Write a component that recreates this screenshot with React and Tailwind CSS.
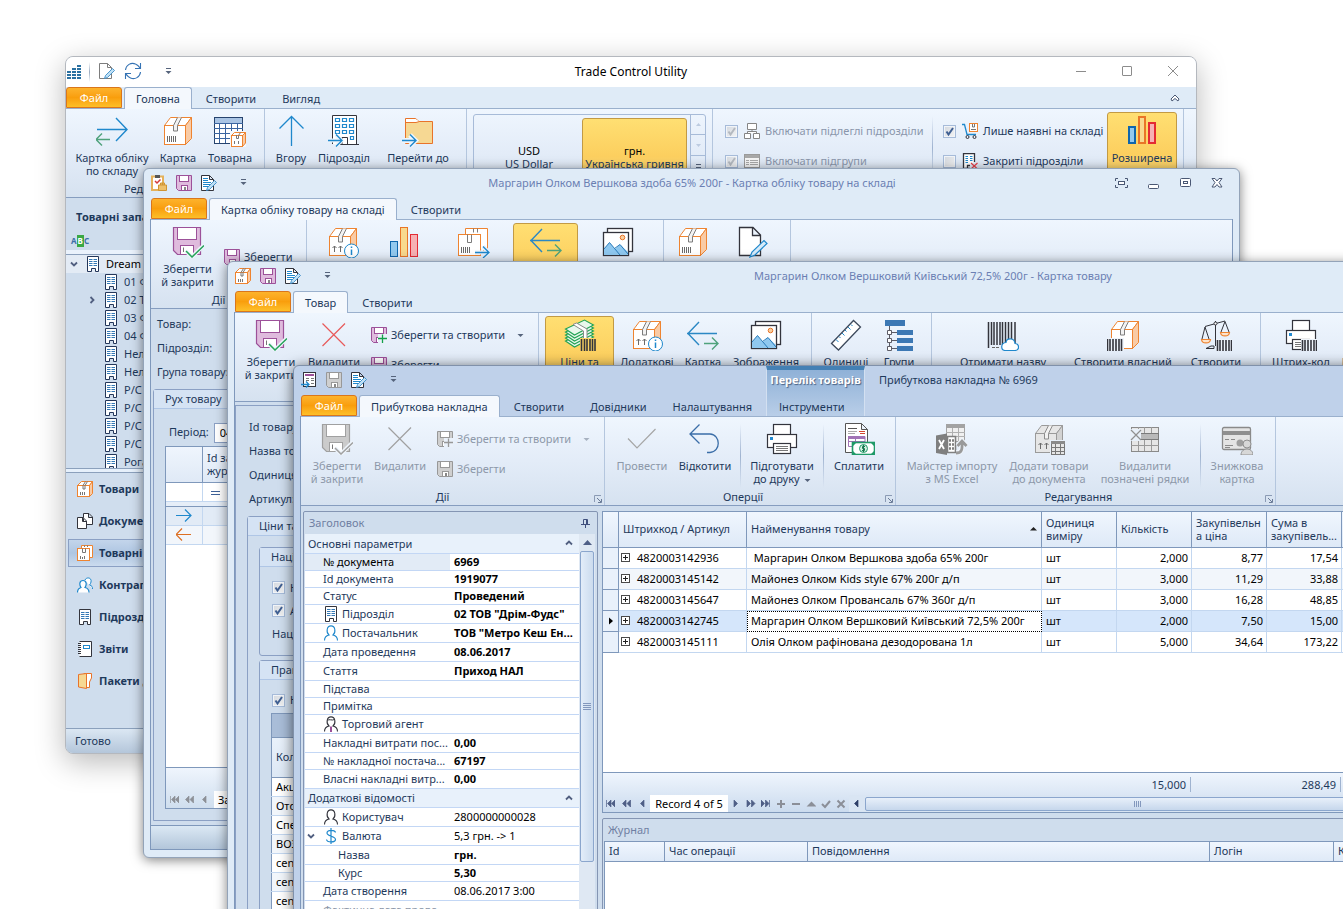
import React from "react";

const BLUE = "#1f88cc";
const GREEN = "#4fa27c";
const DARK = "#33343c";
const ORANGE = "#ee8431";
const PURPLE = "#9c5199";
const GRAY = "#9a9a9a";

/* ---------- icons ---------- */

const Icon = ({ size = 32, box = 32, children }) => (
  <svg
    width={size}
    height={size}
    viewBox={`0 0 ${box} ${box}`}
    fill="none"
    className="shrink-0"
    aria-hidden="true"
  >
    {children}
  </svg>
);

const BoxShape = ({ gray, arrows }) => {
  const line = gray ? GRAY : ORANGE;
  return (
    <g stroke={line}>
      <path d="M2.5 10.5 8.5 2.5H29.5L23.5 10.5Z" fill={gray ? "#e6e6e6" : "#fff"} />
      <path d="M23.5 10.5 29.5 2.5V23.5L23.5 29.5Z" fill={gray ? "#d2d2d2" : "#f9cba5"} />
      <rect x="2.5" y="10.5" width="21" height="19" fill={gray ? "#e6e6e6" : "#fff"} />
      <path d="M15.5 2.5 11.5 10.5V16H15.5V10.5L19.5 2.5" stroke={gray ? "#8c8c8c" : "#7c7c7c"} fill="#f2f2f2" />
      {arrows ? (
        <path d="M7.5 26V20M5.5 22 7.5 20 9.5 22M13.5 26V20M11.5 22 13.5 20 15.5 22" stroke="#6b6b6b" />
      ) : (
        <path d="M5.5 21V27M7.5 21V27M9.5 21V27M11.5 21V27M13.5 21V27" stroke="#6b6b6b" />
      )}
    </g>
  );
};

const Barcode = ({ x, y, w = 15, h = 12 }) => (
  <g>
    <rect x={x - 1} y={y - 1} width={w + 2} height={h + 2} fill="#eef4fb" />
    <path
      d={`M${x + 0.5} ${y}V${y + h}M${x + 3} ${y}V${y + h}M${x + 6} ${y}V${y + h}M${x + 9} ${y}V${y + h}M${x + 12} ${y}V${y + h}M${x + 14.5} ${y}V${y + h}`}
      stroke={DARK}
      strokeWidth="1.6"
    />
  </g>
);

const BoxIcon = () => (
  <Icon>
    <BoxShape />
  </Icon>
);

const SmallBoxIcon = () => (
  <Icon size={16} box={16}>
    <g stroke={ORANGE}>
      <path d="M.5 4.5 4.5.5H15.5L12.5 4.5Z" fill="#fff" />
      <path d="M12.5 4.5 15.5.5V12.5L12.5 15.5Z" fill="#f9cba5" />
      <rect x=".5" y="4.5" width="12" height="11" fill="#fff" />
      <path d="M8.5.5 6 4.5V8H8V4.5L10.5.5" stroke="#777" />
      <path d="M3.5 11V14M5.5 11V14M7.5 11V14" stroke="#777" />
    </g>
  </Icon>
);

const StockIcon = () => (
  <Icon size={16} box={16}>
    <g stroke={ORANGE}>
      <path d="M4.5 4V.5H15.5V12.5H13" fill="#fff" />
      <rect x=".5" y="3.5" width="12" height="12" fill="#fff" />
      <path d="M5.5 3.5V7.5H8.5V3.5M7.5.5V2M10.5.5V2" stroke="#777" />
      <path d="M3.5 11V14M5.5 12V14M7.5 11V14" stroke="#777" />
    </g>
  </Icon>
);

const BoxInfoIcon = () => (
  <Icon>
    <BoxShape arrows />
    <circle cx="24.5" cy="25" r="7" fill="#fff" stroke={BLUE} />
    <path d="M24.5 23.5V29M24.5 20.5V22" stroke={BLUE} strokeWidth="1.5" />
  </Icon>
);

const BoxesArrowIcon = () => (
  <Icon>
    <g stroke={ORANGE}>
      <path d="M7.5 8V2.5H29.5V24.5H25" fill="#fff" />
      <rect x=".5" y="8.5" width="22" height="21" fill="#fff" />
      <path d="M9.5 8.5V16.5H13.5V8.5M15.5 2.5V6.5M19.5 2.5V6.5" stroke="#7c7c7c" />
      <path d="M3.5 21V27M5.5 21V27M7.5 21V27M9.5 21V27M11.5 21V27" stroke="#6b6b6b" />
    </g>
    <path d="M17 26.5H31M25 20.5 31 26.5 25 32" stroke="#eaf2fb" strokeWidth="4" />
    <path d="M17 26.5H31M25 20.5 31 26.5 25 32" stroke={BLUE} strokeWidth="1.3" />
  </Icon>
);

const BoxTableIcon = () => (
  <Icon>
    <BoxShape gray arrows />
    <rect x="17" y="17" width="15" height="15" fill="#e8f0f9" />
    <rect x="18.5" y="18.5" width="13" height="13" fill="#e6e6e6" stroke="#777" />
    <rect x="18" y="18" width="14" height="3" fill="#8a8a8a" />
    <path d="M18 24.5H32M18 28.5H32M22.5 21V32M27.5 21V32" stroke="#777" />
  </Icon>
);

const BoxBarcodeIcon = () => (
  <Icon>
    <g transform="translate(2 0)">
      <BoxShape />
    </g>
    <Barcode x={0} y={20} w={16} h={12} />
  </Icon>
);

const GoodsTableIcon = () => (
  <Icon>
    <rect x=".5" y="2.5" width="28" height="26" fill="#fff" stroke="#26436d" />
    <rect x="1" y="3" width="27" height="5" fill="#a9c4e4" />
    <path d="M0 8.5H29M0 13.5H29M0 18.5H29M0 23.5H29M5.5 8V28M11.5 8V28M17.5 8V28M23.5 8V28" stroke="#3a64a0" />
    <rect x="16" y="16" width="16" height="16" fill="#f3f8fd" />
    <g stroke={ORANGE} fill="#fff">
      <path d="M17.5 20.5 20.5 17.5H31.5L28.5 20.5Z" />
      <path d="M28.5 20.5 31.5 17.5V28L28.5 31.5Z" fill="#f9cba5" />
      <rect x="17.5" y="20.5" width="11" height="11" />
      <path d="M22.5 20V23.5H24.5V20.5L26.5 17.5M20.5 26V29M24.5 26V29" stroke="#777" fill="none" />
    </g>
  </Icon>
);

const FlowRightIcon = () => (
  <Icon>
    <path d="M1 14.5H31M20 3 31 14.5 20 26" stroke={BLUE} strokeWidth="1.4" />
    <path d="M14 24.5H0M6 18.5 0 24.5 6 30.5" stroke={GREEN} strokeWidth="1.4" />
  </Icon>
);

const FlowLeftIcon = () => (
  <Icon>
    <path d="M30 14.5H0M12 3 1 14.5 12 26" stroke="#2b88c4" strokeWidth="1.4" />
    <path d="M17 24.5H31M25 18.5 31 24.5 25 30.5" stroke={GREEN} strokeWidth="1.4" />
  </Icon>
);

const ArrowUpIcon = () => (
  <Icon>
    <path d="M16.5 31V2M4.5 13.5 16.5 1.5 28.5 13.5" stroke={BLUE} strokeWidth="1.3" />
  </Icon>
);

const BranchIcon = () => (
  <Icon>
    <path d="M4.5 29V.5H28.5V29.5M12 29.5H31M14 29V22.5H19.5V29" fill="#fff" stroke={DARK} />
    <g stroke={BLUE} strokeWidth="1.2">
      {[3.5, 9.5, 15.5].map((y) => (
        <path key={y} d={`M7.5 ${y}h4v3h-4ZM14.5 ${y}h4v3h-4ZM21.5 ${y}h4v3h-4Z`} />
      ))}
      <path d="M22.5 21.5h3v3h-3Z" />
    </g>
    <path d="M0 25.5H13M8 20 13.5 25.5 8 31" stroke="#eef5fc" strokeWidth="4" />
    <path d="M0 25.5H14M8 19.5 14 25.5 8 31.5" stroke={BLUE} strokeWidth="1.4" />
  </Icon>
);

const FolderGoIcon = () => (
  <Icon>
    <path d="M3.5 28.5V3.5H13.5L17 6.5H30.5V28.5Z" fill="#f6d893" stroke="#e8732a" />
    <path d="M4 7.5H14L17.5 6.5L13.5 4H4Z" fill="#fff" />
    <path d="M4 7.5H14L17.5 6.5" stroke="#e8732a" />
    <path d="M0 25.5H13M8 20 13.5 25.5 8 31" stroke="#eef5fc" strokeWidth="5" />
    <path d="M0 25.5H14M8 19.5 14 25.5 8 31.5" stroke={BLUE} strokeWidth="1.4" />
  </Icon>
);

const ChartIcon = ({ bold }) => (
  <Icon>
    {bold ? (
      <g strokeWidth="2">
        <rect x="3" y="12" width="6" height="16" fill="#93c9ee" stroke="#0f66ad" />
        <rect x="13" y="2" width="6" height="26" fill="#f8d98e" stroke="#e97527" />
        <rect x="23" y="8" width="6" height="20" fill="#f6b1b4" stroke="#e42a33" />
      </g>
    ) : (
      <g>
        <rect x="2.5" y="15.5" width="7" height="15" fill="#93c9ee" stroke="#0f66ad" />
        <rect x="12.5" y="1.5" width="7" height="29" fill="#f8d98e" stroke="#e97527" />
        <rect x="22.5" y="8.5" width="7" height="22" fill="#f6b1b4" stroke="#e42a33" />
      </g>
    )}
  </Icon>
);

const SaveCloseIcon = ({ gray }) => {
  const line = gray ? "#a0a0a0" : PURPLE;
  return (
    <Icon>
      <g stroke={line}>
        <path d="M1.5 1.5H28.5V28.5H5.5L1.5 24.5Z" fill={gray ? "#cbcbcb" : "#dfbbdd"} strokeWidth="1.2" />
        <rect x="5.5" y="1.5" width="19" height="12" fill="#fff" />
        <rect x="8.5" y="19.5" width="13" height="9" fill="#fff" />
      </g>
      <path d="M11.5 21.5V26" stroke="#777" />
      <path d="M14 25 20 31 32 19" stroke="#eef4fb" strokeWidth="4" />
      <path d="M14 25 20 31 32 19.5" stroke={gray ? "#a0a0a0" : "#27a35a"} strokeWidth="1.5" />
    </Icon>
  );
};

const SaveIcon = ({ gray, plus }) => {
  const line = gray ? "#989898" : PURPLE;
  return (
    <Icon size={16} box={16}>
      <path d="M.5.5H15.5V15.5H2.5L.5 13.5Z" fill={gray ? "#cfcfcf" : "#dfbbdd"} stroke={line} />
      <rect x="3.5" y=".5" width="9" height="6" fill="#fff" stroke={line} />
      <rect x="5.5" y="10.5" width="6" height="5" fill="#fff" stroke={line} />
      <rect x="8" y="12" width="2" height="3" fill="#888" />
      {plus && (
        <>
          <rect x="7" y="7" width="9" height="9" fill="#eaf1fa" />
          <path d="M11.5 7.5V16M7 11.5H16" stroke={gray ? "#989898" : "#14a04a"} strokeWidth="1.3" />
        </>
      )}
    </Icon>
  );
};

const DeleteIcon = ({ gray }) => (
  <Icon>
    <path d="M4.5 4.5 27 27M27 4.5 4.5 27" stroke={gray ? "#a0a0a0" : "#e85a5a"} strokeWidth="1.2" />
  </Icon>
);

const PicturesIcon = () => (
  <Icon>
    <rect x="5.5" y="2.5" width="25" height="23" fill="#fff" stroke={DARK} strokeWidth="1.3" />
    <rect x="1.5" y="6.5" width="25" height="23" fill="#fff" stroke={DARK} strokeWidth="1.3" />
    <path d="M2 23 7.5 16.5 13 23 18 18.5 26 26V29H2Z" fill="#8fc8ef" />
    <path d="M2 23 7.5 16.5 18 29M12.5 22.5 18 18.5 26 28" stroke="#2b7cba" />
    <circle cx="20.5" cy="11.5" r="2.3" fill="#f9cfa0" stroke="#e97527" />
  </Icon>
);

const DocPencilIcon = () => (
  <Icon>
    <path d="M3.5 1.5H17L24.5 9V29.5H3.5ZM16.5 1.5V9.5H24.5" fill="#fff" stroke={DARK} strokeWidth="1.3" />
    <path d="M14 31 16 26 28 14.5 31 17.5 19 29Z" fill="#d6ebfa" stroke={BLUE} strokeWidth="1.2" />
  </Icon>
);

const MoneyIcon = () => (
  <Icon>
    <g stroke="#23a455" fill="#e8f7ec" strokeWidth="1.1">
      {[10, 7, 4, 1, -2].map((y) => (
        <path key={y} d={`M1.5 ${y + 12} 20.5 ${y + 3} 29.5 ${y + 8} 10.5 ${y + 18}Z`} />
      ))}
    </g>
    <path d="M9 5.5 19.5 12V22L23 20V10L12.5 4Z" fill="#fff" stroke="#8a8a8a" />
    <rect x="16" y="19" width="16" height="13" fill="#fcd564" />
    <path d="M17.5 20V32M20.5 20V32M23 20V32M26 20V32M28.5 20V32M31 20V32" stroke={DARK} strokeWidth="1.6" />
  </Icon>
);

const RulerIcon = () => (
  <Icon>
    <path d="M1.5 24.5 23.5 1.5 30.5 8 8.5 31Z" fill="#fff" stroke="#3e4a5c" strokeWidth="1.3" />
    <path d="M6 20.5 8.5 23M9 17.5 10.5 19M12 14 14.5 16.5M15 11 16.5 12.5M18 8 20.5 10.5M21 5.5 22.5 7" stroke={BLUE} />
  </Icon>
);

const HierarchyIcon = () => (
  <Icon>
    <path d="M6.5 7V29M6 13.5H14M6 21.5H14M6 29.5H14" stroke="#5c5c66" />
    <path d="M2 1h20v6H2ZM14 11h16v5H14ZM14 19h16v5H14ZM14 27h16v5H14Z" fill="#3c78b4" />
    <path d="M4.5 11.5h4v4h-4ZM4.5 19.5h4v4h-4ZM4.5 27.5h4v4h-4Z" fill="#fff" stroke="#5c5c66" />
  </Icon>
);

const BarcodeCloudIcon = () => (
  <Icon>
    <path d="M1.5 3V29M4.5 3V26M7 3V26M10 3V26M13 3V26M15.5 3V26M18.5 3V26M21.5 3V26M24.5 3V26M28 3V26" stroke={DARK} strokeWidth="1.5" />
    <path d="M5 28.5H13" stroke="#666" strokeDasharray="3 1" />
    <path d="M18 31.5H28C33 31 32.5 25 28 24.5 27.5 18.5 19.5 18.5 19 23.5 13.5 24 13.5 31 18 31.5Z" fill="#fff" stroke={BLUE} strokeWidth="1.2" />
  </Icon>
);

const ScalesIcon = () => (
  <Icon>
    <path d="M15.5 2V27M5 7.5 14 5 25 2M6 29.5H14V27H11L6 29.5M5 8 2 20M5 8 9 20M25 2.5 21 13M25 2.5 29 13" stroke={DARK} />
    <circle cx="15.5" cy="4.5" r="1.5" fill="#fff" stroke={DARK} />
    <path d="M1.5 20.5H10.5C10 25 2 25 1.5 20.5ZM20.5 13.5H29.5C29 18 21 18 20.5 13.5Z" fill="#fde3ca" stroke={ORANGE} strokeWidth="1.2" />
    <Barcode x={17} y={21} w={15} h={11} />
  </Icon>
);

const PrinterShape = () => (
  <g stroke={DARK} fill="#fff" strokeWidth="1.2">
    <rect x="7.5" y="1.5" width="17" height="12" />
    <rect x="1.5" y="11.5" width="29" height="13" />
    <rect x="4" y="14" width="3" height="3" fill="#2289d0" stroke="none" />
    <rect x="7.5" y="20.5" width="17" height="10" />
    <path d="M10 23.5H22M10 25.5H22M10 27.5H22" stroke="#777" strokeWidth="1" />
  </g>
);

const PrinterIcon = () => (
  <Icon>
    <PrinterShape />
  </Icon>
);

const PrinterBarcodeIcon = () => (
  <Icon>
    <PrinterShape />
    <Barcode x={17} y={21} w={15} h={11} />
  </Icon>
);

const CheckIcon = () => (
  <Icon>
    <path d="M2 15.5 11 25 29.5 6" stroke="#a6a6a6" strokeWidth="1.2" />
  </Icon>
);

const UndoIcon = () => (
  <Icon>
    <path d="M10.5 1.5 1 11 10.5 20.5M1 11H21C32 11.5 32 29 21 29.5H18" stroke="#3b6ea8" strokeWidth="1.3" />
  </Icon>
);

const PayIcon = () => (
  <Icon>
    <path d="M2.5.5H18.5L24.5 6.5V29.5H2.5ZM18.5.5V6.5H24.5" fill="#fff" stroke="#555" />
    <path d="M5 5.5H14" stroke="#555" />
    <path d="M5 8.5H14M5 10.5H12" stroke="#aaa" />
    <path d="M16 8.5H22M17 10.5H22" stroke="#d2452f" strokeWidth="1.2" />
    <path d="M5.5 13.5H22V23.5H5.5ZM5 18.5H22M12.5 14V23" stroke="#a173b5" />
    <rect x="5" y="13" width="17" height="3" fill="#a173b5" />
    <rect x="9.5" y="19.5" width="22" height="12" fill="#fff" stroke="#1f9a68" strokeWidth="1.6" />
    <circle cx="20.5" cy="25.5" r="4" fill="#d5f0e2" stroke="#1f9a68" />
    <path d="M22 23.5H19.5V25.5H21.5V27.5H19M20.5 22V29" stroke="#17784f" />
    <path d="M10 20h3l-3 3ZM31 20h-3l3 3ZM10 31h3l-3-3ZM31 31h-3l3-3Z" fill="#1f9a68" />
  </Icon>
);

const ExcelIcon = () => (
  <Icon>
    <rect x="10.5" y="1.5" width="18" height="17" fill="#f0f0f0" stroke="#a3a3a3" />
    <rect x="10" y="1" width="19" height="4" fill="#a3a3a3" />
    <path d="M10 9.5H29M10 13.5H29M16.5 5V19M22.5 5V19" stroke="#b0b0b0" />
    <path d="M0 12.5 11 10.5V32L0 30Z" fill="#7f7f7f" />
    <path d="M3 17 8 26M8 17 3 26" stroke="#fff" strokeWidth="1.8" />
    <path d="M11.5 13.5H19.5V29.5H11.5Z" fill="#fff" stroke="#7f7f7f" strokeWidth="1.6" />
    <path d="M13 17.5H18M13 21.5H18M13 25.5H18" stroke="#7f7f7f" strokeWidth="2.4" strokeDasharray="2 1" />
    <path d="M20 29.5C25 30 26.5 27 26 19M21.5 23 26 18 30.5 23" stroke="#eef4fb" strokeWidth="5" />
    <path d="M20 30C25.5 30 26.5 27 26 19.5M21.5 23 26 18 30.5 23" stroke="#9a9a9a" strokeWidth="2.8" />
  </Icon>
);

const RowsDeleteIcon = () => (
  <Icon>
    <rect x="2.5" y="4.5" width="27" height="24" fill="#e6e6e6" stroke="#8a8a8a" />
    <path d="M2 10.5H30M2 16.5H30M2 22.5H30M9.5 4V28M15.5 4V28M22.5 4V28" stroke="#9a9a9a" />
    <rect x="11.5" y="10.5" width="18" height="6" fill="#b9b9b9" stroke="#7b7b7b" />
    <rect x="1" y="6" width="11" height="12" fill="#e8f0f9" />
    <path d="M2 7 12 17M12 7 2 17" stroke="#909090" strokeWidth="1.2" />
  </Icon>
);

const CardUserIcon = () => (
  <Icon>
    <rect x="1.5" y="4.5" width="28" height="22" rx="1.5" fill="#e4e4e4" stroke="#8a8a8a" strokeWidth="1.3" />
    <rect x="2" y="8" width="27" height="4" fill="#8f8f8f" />
    <path d="M4 16.5H8M10 16.5H14M4 22.5H12M4 24.5H9" stroke="#8a8a8a" />
    <circle cx="19" cy="20" r="3.5" fill="#9e9e9e" />
    <path d="M20 32C20 24 32 24 32 32Z" fill="#d7d7d7" stroke="#909090" />
    <circle cx="26" cy="21" r="4" fill="#d7d7d7" stroke="#909090" />
  </Icon>
);

const BuildingIcon = ({ color = "#24375a" }) => (
  <Icon size={16} box={16}>
    <path d="M2.5 15.5V.5H13.5V15.5H10.5V12.5H6.5V15.5Z" fill="#fff" stroke={color} />
    <path
      d="M4 3.5H7.5M8.5 3.5H12M4 5.5H7.5M8.5 5.5H12M4 7.5H7.5M8.5 7.5H12M4 9.5H7.5M8.5 9.5H12"
      stroke="#3579b5"
    />
  </Icon>
);

const BuildingClosedIcon = () => (
  <Icon size={16} box={16}>
    <path d="M1.5 15.5V.5H12.5V9M1 15.5H8M5.5 15V12.5H8" fill="#fff" stroke={DARK} strokeWidth="1.3" />
    <path d="M3.5 3.5H6M8 3.5H10.5M3.5 5.5H6M8 5.5H10.5M3.5 7.5H6M8 7.5H10.5M3.5 9.5H6" stroke={BLUE} />
    <path d="M9 10 15.5 16M15.5 10 9 16" stroke="#e5404a" strokeWidth="1.2" />
  </Icon>
);

const CartIcon = () => (
  <Icon size={16} box={16}>
    <path d="M0 1.5H2.5L5 11.5H14" stroke={BLUE} strokeWidth="1.3" />
    <rect x="7.5" y=".5" width="8" height="8" fill="#fff" stroke={ORANGE} />
    <path d="M10.5 1V4H12.5V1M9 6.5H14" stroke="#777" />
    <circle cx="5.5" cy="14" r="1.5" stroke={DARK} />
    <circle cx="12.5" cy="14" r="1.5" stroke={DARK} />
  </Icon>
);

const OrgIcon = () => (
  <Icon size={16} box={16}>
    <path
      d="M3.5.5H12.5V6.5H3.5ZM.5 10.5H6.5V15.5H.5ZM9.5 10.5H15.5V15.5H9.5ZM8 6.5V8.5M3.5 10.5V8.5H12.5V10.5"
      fill="#fff"
      stroke="#858585"
    />
  </Icon>
);

const ListIcon = () => (
  <Icon size={16} box={16}>
    <rect x=".5" y="1.5" width="15" height="13" fill="#f5f5f5" stroke="#9a9a9a" />
    <rect x="1" y="2" width="14" height="3" fill="#a8a8a8" />
    <path d="M2 7.5H5M6 7.5H14M2 9.5H5M6 9.5H14M2 11.5H5M6 11.5H14" stroke="#a8a8a8" />
  </Icon>
);

const DocEditIcon = ({ lines }) => (
  <Icon size={16} box={16}>
    <path d="M.5.5H8.5L12.5 4.5V15.5H.5ZM8.5.5V4.5H12.5" fill="#fff" stroke={lines ? DARK : "#7d7d7d"} />
    {lines && <path d="M2 3.5H7M2 5.5H7M2 7.5H10M2 9.5H9M2 11.5H8" stroke={BLUE} />}
    <path d="M5.5 15.5 6.5 12.5 13.5 5.5 15.5 7.5 8.5 14.5Z" fill="#bfe0f5" stroke="#3b8bc6" strokeWidth=".9" />
  </Icon>
);

const RefreshIcon = () => (
  <Icon size={18} box={18}>
    <path
      d="M1.5 8C2 3 7 0 11.5 2 14 3 15 4.5 16.5 6.5M16.5 1V6.5H11M16.5 10C16 15 11 18 6.5 16 4 15 3 13.5 1.5 11.5M1.5 17V11.5H7"
      stroke="#3573b4"
      strokeWidth="1.1"
    />
  </Icon>
);

const LogoIcon = () => (
  <Icon size={16} box={16}>
    <path
      d="M0 7h4v2H0ZM0 10h4v2H0ZM0 13h4v2H0ZM5 4h4v2H5ZM5 7h4v2H5ZM5 10h4v2H5ZM5 13h4v2H5ZM10 1h4v2H10ZM10 4h4v2H10ZM10 7h4v2H10ZM10 10h4v2H10ZM10 13h4v2H10Z"
      fill="#2b71a1"
    />
  </Icon>
);

const ClipboardIcon = () => (
  <Icon size={16} box={16}>
    <path d="M1 1.5H12V15H1Z" fill="#fff" stroke="#e5b15a" strokeWidth="2" />
    <rect x="4" y="0" width="5" height="3" fill="#555" />
    <path d="M4 6 6 8 9.5 4.5" stroke="#d43a3a" strokeWidth="1.5" />
    <path d="M7.5 10H15.5V15.5H7.5ZM9.5 10V8H11.5V10M11.5 8H13.5V10" fill="#eec06a" stroke="#cf9433" />
  </Icon>
);

const InvoiceIcon = () => (
  <Icon size={16} box={16}>
    <rect x="2.5" y=".5" width="12" height="14" fill="#fff" stroke={DARK} />
    <rect x="4" y="2" width="9" height="2" fill={PURPLE} />
    <path d="M5 6.5H8M10 6.5H13M5 8.5H8M10 8.5H13M10 11.5H13" stroke="#777" />
    <path d="M0 12.5H8M5 9.5 8 12.5 5 15.5" stroke={BLUE} strokeWidth="1.3" />
  </Icon>
);

const DocsIcon = () => (
  <Icon size={16} box={16}>
    <path d="M6.5.5H12L15.5 4V11.5H6.5ZM11.5.5V4.5H15.5" fill="#fff" stroke={DARK} />
    <path d="M.5 4.5H6L9.5 8V15.5H.5ZM5.5 4.5V8.5H9.5" fill="#fff" stroke={DARK} />
  </Icon>
);

const PersonIcon = ({ color = DARK, tie }) => (
  <Icon size={16} box={16}>
    <path
      d="M1.5 15.5C1.5 12 4 10.5 6 10 3 7.5 3.5.9 8 .9S13 7.5 10 10C12 10.5 14.5 12 14.5 15.5"
      fill="#fff"
      stroke={color}
      strokeWidth="1.1"
    />
    {tie && (
      <>
        <path d="M4.5 4.5C6 2.5 9 5 11.5 3.5" stroke={color} />
        <path d="M8 10.5V16" stroke={PURPLE} strokeWidth="2" />
      </>
    )}
  </Icon>
);

const PeopleIcon = () => (
  <Icon size={16} box={16}>
    <path d="M8 3C9 0 15 0 14 5 13.5 7 13 7 12.5 8 15 8.5 15.5 10 15.5 12" fill="#fff" stroke={BLUE} />
    <path
      d="M.5 15.5C.5 12 2.5 11 4 10.5 2 7.5 2.5 3.5 6 3.5S10 7.5 8 10.5C10 11 12 12 12 15.5"
      fill="#fff"
      stroke={BLUE}
      strokeWidth="1.2"
    />
  </Icon>
);

const ReportIcon = () => (
  <Icon size={16} box={16}>
    <path d="M2.5.5H14.5V15.5H2.5" fill="#fff" stroke={DARK} />
    <path d="M1 2.5H4M1 4.5H4M1 6.5H4M1 8.5H4M1 10.5H4M1 12.5H4" stroke={DARK} />
    <rect x="6.5" y="4.5" width="6" height="3" stroke={BLUE} />
  </Icon>
);

const FolderIcon = () => (
  <Icon size={16} box={16}>
    <path d="M7 .5H14.5V5L12.5 9V14.5H8Z" fill="#fff" stroke="#e8732a" />
    <path d="M1.5 1.5 9.5.5V15.5L1.5 14Z" fill="#f6d893" stroke="#e8732a" />
  </Icon>
);

const DollarIcon = () => (
  <Icon size={16} box={16}>
    <path d="M12.5 4.5C12 1.5 4 1.5 4 5S12.5 8 12.5 11.5 4 14.5 3.5 11.5M8 0V16" stroke={BLUE} strokeWidth="1.2" />
  </Icon>
);

const Caret = ({ gray }) => (
  <Icon size={7} box={7}>
    <path d="M.5 2H6.5L3.5 5Z" fill={gray ? "#a7b1c0" : "#56647c"} />
  </Icon>
);

const Chevron = ({ path }) => (
  <Icon size={8} box={8}>
    <path d={path} stroke="#515f80" strokeWidth="1.8" />
  </Icon>
);

const CHEVRON_UP = "M1 5.5 4 2.5 7 5.5";
const CHEVRON_DOWN = "M1 2.5 4 5.5 7 2.5";
const CHEVRON_RIGHT = "M2.5 1 5.5 4 2.5 7";

/* ---------- window chrome ---------- */

const QuickAccess = ({ icons }) => (
  <div className="flex items-center pb-[2px]">
    <div className="flex items-center gap-[9px]">
      {icons.map((icon, i) => (
        <button key={i} className="block">
          {icon}
        </button>
      ))}
    </div>
    <button className="ml-[23px] block" aria-label="Панель швидкого доступу">
      <Icon size={7} box={7}>
        <path d="M1 .5H6" stroke="#56647c" />
        <path d="M.5 3H6.5L3.5 6Z" fill="#56647c" />
      </Icon>
    </button>
  </div>
);

const TabBar = ({ active, tabs }) => (
  <div className="flex h-[21px] items-end leading-[20px]">
    <button className="h-[21px] w-14 rounded-t-[3px] border border-[#d9761c] bg-gradient-to-b from-[#fdb32b] via-[#f99e0c] to-[#fdbf27] text-center text-white">
      Файл
    </button>
    <button className="relative z-10 -mb-px ml-[2px] h-[22px] rounded-t-[3px] border border-b-0 border-[#9ab0cd] bg-[#f4f8fd] px-[11px]">
      {active}
    </button>
    {tabs.map((t) => (
      <button key={t} className="ml-[2px] h-[21px] px-3 pt-[2px] leading-[19px]">
        {t}
      </button>
    ))}
  </div>
);

const Ribbon = ({ children }) => (
  <div className="flex h-[90px] shrink-0 overflow-hidden border-y border-t-[#9ab0cd] border-b-[#869dbf] bg-gradient-to-b from-[#eff6fe] via-[#e3ecf8] to-[#d6e2f0]">
    {children}
  </div>
);

const Group = ({ caption, width, launcher, children }) => (
  <div className={`relative flex shrink-0 flex-col border-r border-[#b4c6de] ${width}`}>
    <div className="flex h-[72px] pt-[3px]">{children}</div>
    {caption && <div className="pt-px pr-5 text-center leading-[13px]">{caption}</div>}
    {launcher && (
      <button className="absolute right-[2px] bottom-[2px]" aria-label={caption}>
        <Icon size={8} box={8}>
          <path d="M.5 7V.5H7" stroke="#8b9bb5" />
          <path d="M3 3 7 7M7.5 4V7.5H4" stroke="#6b7c98" />
        </Icon>
      </button>
    )}
  </div>
);

const BigButton = ({ icon, lines, width, selected, disabled, caret }) => (
  <button
    disabled={disabled}
    className={`flex h-[84px] shrink-0 flex-col items-center whitespace-nowrap ${width} ${
      selected
        ? "rounded-[3px] border border-[#c29a45] bg-gradient-to-b from-[#ffdf72] via-[#fccf5f] to-[#fde183] pt-[2px]"
        : "pt-[3px]"
    } ${disabled ? "text-[#8d98a9]" : ""}`}
  >
    {icon}
    {lines && (
      <span className="mt-1 block text-center leading-[13px]">
        {lines[0]}
        {lines[1] && (
          <>
            <br />
            {lines[1]}
            {caret && (
              <span className="ml-1 inline-block align-middle">
                <Caret />
              </span>
            )}
          </>
        )}
      </span>
    )}
  </button>
);

const SmallButton = ({ icon, label, disabled, caret }) => (
  <button
    disabled={disabled}
    className={`flex h-[30px] items-center gap-1 whitespace-nowrap ${disabled ? "text-[#8d98a9]" : ""}`}
  >
    {icon}
    {label}
    {caret && (
      <span className="ml-2">
        <Caret gray={disabled} />
      </span>
    )}
  </button>
);

const Divider = () => (
  <div className="mt-1 h-16 w-px shrink-0 bg-gradient-to-b from-transparent via-[#9fb3d0] to-transparent" />
);

const Check = ({ label, icon, checked, disabled }) => (
  <label
    className={`flex h-[30px] items-center whitespace-nowrap ${disabled ? "text-[#8a96ab]" : ""}`}
  >
    <span className="relative block size-[13px]">
      <input
        type="checkbox"
        defaultChecked={checked}
        disabled={disabled}
        className="block size-[13px] appearance-none border border-[#a6bbd9] bg-gradient-to-br from-[#d3d8df] to-[#f4f4f4] shadow-[inset_0_0_0_1px_#f1f4f8]"
      />
      {checked && (
        <svg className="pointer-events-none absolute inset-0" width="13" height="13" viewBox="0 0 13 13" fill="none">
          <path d="M3.5 6.5 5.5 9.5 10 3" stroke={disabled ? "#b4b9c0" : "#3f5f92"} strokeWidth="2" />
        </svg>
      )}
    </span>
    {icon && <span className="ml-[6px]">{icon}</span>}
    <span className="ml-[5px]">{label}</span>
  </label>
);

/* ---------- record navigator ---------- */

const NAV_ICONS = {
  first: "M1.5 1V8M6 1 2.5 4.5 6 8ZM10 1 6.5 4.5 10 8Z",
  fastBack: "M5 1 1.5 4.5 5 8ZM9.5 1 6 4.5 9.5 8Z",
  back: "M7 1 3.5 4.5 7 8Z",
  forward: "M3 1 6.5 4.5 3 8Z",
  fastForward: "M1 1 4.5 4.5 1 8ZM5.5 1 9 4.5 5.5 8Z",
  last: "M8.5 1V8M0 1 3.5 4.5 0 8ZM4.5 1 8 4.5 4.5 8Z",
};

const NavButton = ({ name, color = "#4f5f86" }) => (
  <button className="block" aria-label={name}>
    <Icon size={10} box={10}>
      <path d={NAV_ICONS[name]} fill={color} stroke={color} strokeWidth=".7" />
    </Icon>
  </button>
);

const EditButton = ({ d, name }) => (
  <button className="block" aria-label={name}>
    <Icon size={10} box={10}>
      <path d={d} stroke="#8b8f98" strokeWidth="2" />
    </Icon>
  </button>
);

/* ---------- stock list window ---------- */

const TREE = [
  "01 Філія",
  "02 ТОВ",
  "03 Філія",
  "04 Філія",
  "Нелік",
  "Нелік",
  "Р/С",
  "Р/С",
  "Р/С",
  "Р/С",
  "Рогань",
];

const SECTIONS = [
  { label: "Товари", icon: <SmallBoxIcon /> },
  { label: "Документи", icon: <DocsIcon /> },
  { label: "Товарні запаси", icon: <StockIcon />, selected: true },
  { label: "Контрагенти", icon: <PeopleIcon /> },
  { label: "Підрозділи", icon: <BuildingIcon color={DARK} /> },
  { label: "Звіти", icon: <ReportIcon /> },
  { label: "Пакети документів", icon: <FolderIcon /> },
];

const MainWindow = () => (
  <section className="absolute top-14 right-[146px] bottom-[155px] left-[65px] flex flex-col overflow-hidden rounded-lg border border-[#b4b8be] bg-[#dfebf7] shadow-[0_8px_30px_rgba(0,0,0,0.28)]">
    <header className="grid h-[30px] shrink-0 grid-cols-[1fr_auto_1fr] items-center bg-white">
      <div className="flex items-center pl-px">
        <LogoIcon />
        <div className="mr-[9px] ml-[6px] h-5 w-px bg-gradient-to-b from-transparent via-[#9aaac0] to-transparent" />
        <QuickAccess icons={[<DocEditIcon />, <RefreshIcon />]} />
      </div>
      <h1 className="text-[12px] text-black">Trade Control Utility</h1>
      <div className="flex items-center justify-end gap-9 pr-[18px] pb-[2px] text-[#8c8c8c]">
        <button className="block" aria-label="Згорнути">
          <Icon size={10} box={10}>
            <path d="M0 5.5H10" stroke="currentColor" />
          </Icon>
        </button>
        <button className="block" aria-label="Розгорнути">
          <Icon size={10} box={10}>
            <rect x=".5" y=".5" width="9" height="9" rx=".5" stroke="currentColor" />
          </Icon>
        </button>
        <button className="block" aria-label="Закрити">
          <Icon size={10} box={10}>
            <path d="M0 0 10 10M10 0 0 10" stroke="currentColor" />
          </Icon>
        </button>
      </div>
    </header>

    <div className="flex items-center justify-between">
      <TabBar active="Головна" tabs={["Створити", "Вигляд"]} />
      <button className="mr-4" aria-label="Згорнути стрічку">
        <Icon size={10} box={10}>
          <path d="M1 6 5 2 9 6 8 8 5 5.5 2 8Z" stroke="#4a5874" fill="#fff" />
        </Icon>
      </button>
    </div>

    <Ribbon>
      <Group width="w-[199px] pl-[6px]" caption="Редагування">
        <BigButton width="w-20" icon={<FlowRightIcon />} lines={["Картка обліку", "по складу"]} />
        <BigButton width="w-[52px]" icon={<BoxIcon />} lines={["Картка"]} />
        <BigButton width="w-[52px]" icon={<GoodsTableIcon />} lines={["Товарна"]} />
      </Group>
      <Group width="w-[202px]">
        <BigButton width="w-[52px]" icon={<ArrowUpIcon />} lines={["Вгору"]} />
        <BigButton width="w-[54px]" icon={<BranchIcon />} lines={["Підрозділ"]} />
        <BigButton width="w-[94px]" icon={<FolderGoIcon />} lines={["Перейти до"]} />
      </Group>
      <Group width="w-[246px] px-[6px]">
        <div className="mt-[2px] flex h-20 flex-1 rounded-t-[3px] border border-[#a7bbd8] leading-[13px]">
          <button className="flex flex-1 flex-col items-center pt-[29px] pl-[2px]">
            <span className="text-black">USD</span>
            US Dollar
          </button>
          <button className="mt-[3px] flex w-[105px] flex-col items-center rounded-[3px] border border-[#c29a45] bg-gradient-to-b from-[#ffdf72] via-[#fccf5f] to-[#fde183] pt-[25px] whitespace-nowrap">
            <span className="text-black">грн.</span>
            Українська гривня
          </button>
          <div className="ml-[3px] flex w-[15px] flex-col border-l border-[#a7bbd8]">
            <button className="flex h-5 items-center justify-center border-b border-[#a7bbd8]" aria-label="Вгору">
              <Icon size={5} box={5}>
                <path d="M0 4 2.5 1 5 4Z" fill="#bccbe0" />
              </Icon>
            </button>
            <button className="flex h-[21px] items-center justify-center border-b border-[#a7bbd8]" aria-label="Вниз">
              <Icon size={5} box={5}>
                <path d="M0 1 2.5 4 5 1Z" fill="#bccbe0" />
              </Icon>
            </button>
            <button className="flex h-5 items-center justify-center" aria-label="Усі валюти">
              <Icon size={5} box={5}>
                <path d="M0 .5H5M0 3.5H5" stroke="#56647c" />
              </Icon>
            </button>
          </div>
        </div>
      </Group>
      <Group width="w-[471px] pl-3">
        <div className="w-[207px] shrink-0 pt-1">
          <Check label="Включати підлеглі підрозділи" icon={<OrgIcon />} checked disabled />
          <Check label="Включати підгрупи" icon={<ListIcon />} checked disabled />
        </div>
        <Divider />
        <div className="w-[166px] shrink-0 pt-1 pl-[10px]">
          <Check label="Лише наявні на складі" icon={<CartIcon />} checked />
          <Check label="Закриті підрозділи" icon={<BuildingClosedIcon />} />
        </div>
        <span className="ml-2">
          <BigButton width="w-[70px]" icon={<ChartIcon bold />} lines={["Розширена"]} selected />
        </span>
      </Group>
    </Ribbon>

    <div className="flex min-h-0 flex-1 flex-col bg-[#cfdded]">
      <h2 className="pt-[10px] pl-[10px] leading-[18px] font-bold whitespace-nowrap">Товарні запаси</h2>
      <div className="mt-[7px] mb-px flex h-4 items-center pl-[5px] text-[8px] leading-none font-bold text-[#3b6ea8]">
        <span>A</span>
        <span className="bg-[#3aa845] px-px py-[2px] text-white">B</span>
        <span>C</span>
      </div>
      <div className="h-[5px] shrink-0 border-b border-[#8ba0bc] bg-[#eaf2fc]" />
      <ul className="min-h-0 flex-1 overflow-hidden">
        <li className="flex h-[18px] items-center bg-[#e3ebf5] pl-1 text-black">
          <Chevron path={CHEVRON_DOWN} />
          <span className="ml-[7px]">
            <BuildingIcon />
          </span>
          <span className="ml-[5px]">Dream</span>
        </li>
        {TREE.map((name, i) => (
          <li key={i} className="flex h-[18px] items-center pl-[22px]">
            <span className="w-[15px]">{i === 1 && <Chevron path={CHEVRON_RIGHT} />}</span>
            <BuildingIcon />
            <span className="ml-[5px] whitespace-nowrap">{name}</span>
          </li>
        ))}
      </ul>
      <div className="h-[5px] shrink-0 border-y border-[#8ba0bc] bg-[#e6f0fb]" />
      <nav className="flex h-[255px] shrink-0 flex-col gap-1 pt-[2px] pl-[2px]">
        {SECTIONS.map((s) => (
          <a
            key={s.label}
            href="#"
            className={`flex h-7 items-center gap-[6px] border pl-2 font-bold whitespace-nowrap ${
              s.selected
                ? "border-[#8ba0c4] bg-gradient-to-b from-[#c3d5eb] via-[#afc6e2] to-[#cbdbee]"
                : "border-transparent"
            }`}
          >
            {s.icon}
            {s.label}
          </a>
        ))}
      </nav>
    </div>
    <footer className="h-[25px] shrink-0 border-t border-[#8ba0bc] bg-gradient-to-b from-[#dbe7f3] to-[#b4c6da] pl-[9px] leading-6">
      Готово
    </footer>
  </section>
);

/* ---------- stock card window ---------- */

const FrameButtons = () => (
  <div className="flex items-center justify-end gap-[18px] pr-[9px] pb-[2px] text-[#4a5874]">
    <button className="block" aria-label="На весь екран">
      <Icon size={14} box={14}>
        <path d="M1.5 5V2.5H4M11 2.5H13.5V5M13.5 9V11.5H11M4 11.5H1.5V9" stroke="currentColor" />
        <rect x="4.5" y="5.5" width="6" height="3" stroke="currentColor" fill="#fff" />
      </Icon>
    </button>
    <button className="block" aria-label="Згорнути">
      <Icon size={14} box={14}>
        <rect x="2.5" y="8.5" width="10" height="4" rx="1" stroke="currentColor" fill="#fff" />
      </Icon>
    </button>
    <button className="block" aria-label="Розгорнути">
      <Icon size={14} box={14}>
        <rect x="2.5" y="2.5" width="10" height="8" rx="1" stroke="currentColor" fill="#fff" />
        <rect x="5.5" y="5.5" width="4" height="2" stroke="currentColor" />
      </Icon>
    </button>
    <button className="block" aria-label="Закрити">
      <Icon size={14} box={14}>
        <path d="M2 2.5H5L7 5 9 2.5H12L9 6.5 12 11H9L7 8.5 5 11H2L5 6.5Z" stroke="currentColor" fill="#fff" />
      </Icon>
    </button>
  </div>
);

const StockCardWindow = () => (
  <section className="absolute top-[168px] right-[103px] bottom-[51px] left-[143px] flex flex-col overflow-hidden rounded-md border border-[#93a3b8] bg-[#dfebf7] px-[6px] pb-[7px] shadow-[0_2px_12px_rgba(0,0,0,0.5)]">
    <header className="grid h-[29px] shrink-0 grid-cols-[1fr_auto_1fr] items-center pl-px">
      <QuickAccess icons={[<ClipboardIcon />, <SaveIcon />, <DocEditIcon lines />]} />
      <h2 className="text-[#6b7fb3]">Маргарин Олком Вершкова здоба 65% 200г - Картка обліку товару на складі</h2>
      <FrameButtons />
    </header>
    <div className="pl-px">
      <TabBar active="Картка обліку товару на складі" tabs={["Створити"]} />
    </div>
    <div className="flex min-h-0 flex-1 flex-col border-x border-[#7f98bb] bg-[#cfdded]">
      <Ribbon>
        <Group width="w-[156px]" caption="Дії">
          <BigButton width="w-[73px]" icon={<SaveCloseIcon />} lines={["Зберегти", "й закрити"]} />
          <div className="pt-[19px]">
            <SmallButton icon={<SaveIcon />} label="Зберегти" />
          </div>
        </Group>
        <Group width="w-[357px] pl-[6px]">
          <BigButton width="w-[60px]" icon={<BoxInfoIcon />} />
          <BigButton width="w-[62px]" icon={<ChartIcon />} />
          <BigButton width="w-[78px]" icon={<BoxesArrowIcon />} />
          <BigButton width="w-[65px]" icon={<FlowLeftIcon />} selected />
          <BigButton width="w-20" icon={<PicturesIcon />} />
        </Group>
        <Group width="w-[127px]">
          <BigButton width="w-[58px]" icon={<BoxIcon />} />
          <BigButton width="w-[60px]" icon={<DocPencilIcon />} />
        </Group>
      </Ribbon>
      <div className="flex flex-col pt-1 pl-[6px]">
        {["Товар:", "Підрозділ:", "Група товару:"].map((t) => (
          <div key={t} className="h-6 leading-[22px]">
            {t}
          </div>
        ))}
      </div>
      <div className="mt-1 ml-[2px] flex min-h-0 flex-1 flex-col rounded-tl-[3px] border border-[#8ba0c4]">
        <div className="h-[19px] border-b border-[#afc6e6] bg-[#d5e3f4] pl-[11px] leading-[18px]">Рух товару</div>
        <div className="flex h-[37px] items-center pt-[10px] pl-[15px]">
          <label htmlFor="period">Період:</label>
          <input
            id="period"
            defaultValue="04.06.2017"
            className="ml-[5px] h-[20px] w-24 border border-[#8ba0c4] bg-white px-[5px] text-black"
          />
        </div>
        <div className="mr-3 mb-[11px] ml-[11px] flex min-h-0 flex-1 flex-col border border-[#7f98bb] bg-white">
          <table className="w-full table-fixed border-separate border-spacing-0 leading-[13px]">
            <thead>
              <tr className="h-9 bg-gradient-to-b from-[#eff5fd] to-[#dfe9f6] text-left">
                <th className="w-[37px] border-r border-b border-[#7f98bb]" />
                <th className="border-b border-[#7f98bb] pb-[2px] pl-1 font-normal">
                  Id запису
                  <br />
                  журналу
                </th>
              </tr>
            </thead>
            <tbody>
              <tr className="h-[19px]">
                <td className="border-r border-b border-[#c3d7f0]" />
                <td className="border-b border-[#c3d7f0] pl-2">
                  <Icon size={9} box={9}>
                    <path d="M0 3.5H9M0 6.5H9" stroke="#3d6096" />
                  </Icon>
                </td>
              </tr>
              <tr className="h-[5px]">
                <td colSpan={2} className="border-b border-[#7f98bb] bg-[#e6eef8]" />
              </tr>
              <tr className="h-[19px] bg-[#e2ebf6]">
                <td className="border-r border-b border-[#c3d7f0] pl-[10px]">
                  <Icon size={16} box={16}>
                    <path d="M0 7.5H15M9 1.5 15 7.5 9 13.5" stroke={BLUE} strokeWidth="1.2" />
                  </Icon>
                </td>
                <td className="border-b border-[#c3d7f0]" />
              </tr>
              <tr className="h-[19px] bg-[#f2f6fb]">
                <td className="border-r border-b border-[#c3d7f0] pl-[10px]">
                  <Icon size={16} box={16}>
                    <path d="M15 7.5H0M6 1.5 0 7.5 6 13.5" stroke="#dd6f22" strokeWidth="1.2" />
                  </Icon>
                </td>
                <td className="border-b border-[#c3d7f0]" />
              </tr>
            </tbody>
          </table>
          <div className="mt-auto flex h-[41px] items-end border-t border-[#7f98bb] bg-gradient-to-b from-[#eff5fd] to-[#cfdeee]">
            <div className="flex h-[17px] items-center gap-[5px] pl-[3px]">
              <NavButton name="first" color="#8d9097" />
              <NavButton name="fastBack" color="#8d9097" />
              <NavButton name="back" color="#8d9097" />
              <span className="bg-white px-1 leading-[17px] text-black">Запис 0 з 0</span>
            </div>
          </div>
        </div>
      </div>
      <div className="mt-1 h-[25px] shrink-0 border-y border-[#7f98bb] bg-gradient-to-b from-[#dbe8f4] to-[#b3c6da]" />
    </div>
  </section>
);

/* ---------- goods card window ---------- */

const PRICE_ROWS = ["Акція", "Отсрочка", "Спец", "ВОЗ", "cena1", "cena2", "cena3"];

const GoodsWindow = () => (
  <section className="absolute top-[261px] -right-[295px] -bottom-10 left-[227px] flex flex-col overflow-hidden rounded-tl-md border border-[#93a3b8] bg-[#dfebf7] px-[6px] pb-[7px] shadow-[0_2px_12px_rgba(0,0,0,0.5)]">
    <header className="grid h-[29px] shrink-0 grid-cols-[1fr_auto_1fr] items-center pl-px">
      <QuickAccess icons={[<SmallBoxIcon />, <SaveIcon />, <DocEditIcon lines />]} />
      <h2 className="text-[#6b7fb3]">Маргарин Олком Вершковий Київський 72,5% 200г - Картка товару</h2>
      <FrameButtons />
    </header>
    <div className="pl-px">
      <TabBar active="Товар" tabs={["Створити"]} />
    </div>
    <div className="flex min-h-0 flex-1 flex-col border-x border-[#7f98bb] bg-[#cfdded]">
      <Ribbon>
        <Group width="w-[304px]">
          <BigButton width="w-[72px]" icon={<SaveCloseIcon />} lines={["Зберегти", "й закрити"]} />
          <BigButton width="w-[54px]" icon={<DeleteIcon />} lines={["Видалити"]} />
          <div className="pt-1 pl-[10px]">
            <SmallButton icon={<SaveIcon plus />} label="Зберегти та створити" caret />
            <SmallButton icon={<SaveIcon />} label="Зберегти" />
          </div>
        </Group>
        <Group width="w-[273px] pl-[6px]">
          <BigButton width="w-[69px]" icon={<MoneyIcon />} lines={["Ціни та"]} selected />
          <BigButton width="w-[66px]" icon={<BoxInfoIcon />} lines={["Додаткові"]} />
          <BigButton width="w-[46px]" icon={<FlowLeftIcon />} lines={["Картка"]} />
          <BigButton width="w-20" icon={<PicturesIcon />} lines={["Зображення"]} />
        </Group>
        <Group width="w-[120px] pl-[6px]">
          <BigButton width="w-14" icon={<RulerIcon />} lines={["Одиниці"]} />
          <BigButton width="w-[50px]" icon={<HierarchyIcon />} lines={["Групи"]} />
        </Group>
        <Group width="w-[329px] pl-[6px]">
          <BigButton width="w-[130px]" icon={<BarcodeCloudIcon />} lines={["Отримати назву"]} />
          <BigButton width="w-[110px]" icon={<BoxBarcodeIcon />} lines={["Створити власний"]} />
          <BigButton width="w-[76px]" icon={<ScalesIcon />} lines={["Створити"]} />
        </Group>
        <Group width="w-[200px] pl-[6px]">
          <BigButton width="w-[68px]" icon={<PrinterBarcodeIcon />} lines={["Штрих-код"]} />
          <BigButton width="w-[86px]" icon={<PrinterIcon />} lines={["Роздрукувати"]} />
        </Group>
      </Ribbon>
      <div className="mt-[3px] flex min-h-0 flex-1 flex-col border-t border-l border-[#8ba0c4]">
        <div className="pt-[9px] pl-[13px]">
          {["Id товару:", "Назва товару:", "Одиниця:", "Артикул:"].map((t) => (
            <div key={t} className="h-6 leading-6">
              {t}
            </div>
          ))}
        </div>
        <div className="mt-[5px] ml-[11px] flex-1 rounded-tl-[3px] border border-[#8ba0c4]">
          <div className="h-[19px] border-b border-[#afc6e6] bg-[#d5e3f4] pl-[11px] leading-[18px]">Ціни та залишки</div>
          <div className="mt-[11px] ml-[11px] h-[109px] rounded-[3px] border border-[#8ba0c4]">
            <div className="h-[19px] border-b border-[#afc6e6] bg-[#d5e3f4] pl-[11px] leading-[18px]">Націнка</div>
            <div className="pt-[9px] pl-3 leading-[23px] [&>label]:!h-[23px]">
              <Check label="Націнка" checked />
              <Check label="Автоматично" checked />
              <div>Націнка:</div>
            </div>
          </div>
          <div className="mt-1 ml-[11px] h-[400px] rounded-tl-[3px] border border-[#8ba0c4]">
            <div className="h-[19px] border-b border-[#afc6e6] bg-[#d5e3f4] pl-[11px] leading-[18px]">Прайс</div>
            <div className="pt-[5px] pl-3">
              <Check label="Націнка" checked />
            </div>
            <table className="mt-[-2px] ml-[11px] w-full border-collapse border border-[#7f98bb] bg-white text-left text-black">
              <thead className="text-[#1e395b]">
                <tr className="h-6 bg-[#a9bdd8]">
                  <td className="border-b border-[#7f98bb]" />
                </tr>
                <tr className="h-10 bg-gradient-to-b from-[#e9f1fb] to-[#dde8f5]">
                  <th className="border-b border-[#7f98bb] pl-1 font-normal">Колонка</th>
                </tr>
              </thead>
              <tbody>
                {PRICE_ROWS.map((r, i) => (
                  <tr key={r} className={i % 2 ? "h-[19px] bg-[#f2f6fb]" : "h-[19px]"}>
                    <td className="border-b border-[#c3d7f0] pl-1">{r}</td>
                  </tr>
                ))}
              </tbody>
            </table>
          </div>
        </div>
      </div>
    </div>
  </section>
);

/* ---------- invoice window ---------- */

const MAIN_PROPS = [
  { name: "№ документа", value: "6969", bold: true, focused: true },
  { name: "Id документа", value: "1919077", bold: true },
  { name: "Статус", value: "Проведений", bold: true },
  { name: "Підрозділ", value: '02 ТОВ "Дрім-Фудс"', bold: true, tall: true, icon: <BuildingIcon color={DARK} /> },
  { name: "Постачальник", value: 'ТОВ "Метро Кеш Ен...', bold: true, tall: true, icon: <PersonIcon color={BLUE} /> },
  { name: "Дата проведення", value: "08.06.2017", bold: true, tall: true },
  { name: "Стаття", value: "Приход НАЛ", bold: true, tall: true },
  { name: "Підстава", value: "" },
  { name: "Примітка", value: "" },
  { name: "Торговий агент", value: "", tall: true, icon: <PersonIcon tie /> },
  { name: "Накладні витрати пос...", value: "0,00", bold: true, tall: true },
  { name: "№ накладної постача...", value: "67197", bold: true },
  { name: "Власні накладні витр...", value: "0,00", bold: true, tall: true },
];

const EXTRA_PROPS = [
  { name: "Користувач", value: "2800000000028", tall: true, icon: <PersonIcon /> },
  { name: "Валюта", value: "5,3 грн. -> 1", tall: true, icon: <DollarIcon />, open: true },
  { name: "Назва", value: "грн.", bold: true, tall: true, child: true },
  { name: "Курс", value: "5,30", bold: true, child: true },
  { name: "Дата створення", value: "08.06.2017 3:00", tall: true },
  { name: "Фактична дата прове...", value: "", tall: true, muted: true },
];

const PropCategory = ({ title }) => (
  <tr className="h-[19px] bg-[#e8f1fb]">
    <th colSpan={2} className="border-b border-[#c3d7f5] pr-[6px] pl-[3px] text-left font-normal">
      <span className="flex items-center justify-between">
        {title}
        <Chevron path={CHEVRON_UP} />
      </span>
    </th>
  </tr>
);

const PropRow = ({ row }) => (
  <tr className={row.tall ? "h-[19px]" : "h-[17px]"}>
    <th
      className={`border-b border-[#c3d7f5] text-left font-normal whitespace-nowrap ${
        row.focused ? "bg-[#e2ebf6] text-black" : ""
      } ${row.muted ? "text-[#8d98a9]" : ""}`}
    >
      <span className={`flex items-center ${row.child ? "pl-[33px]" : "pl-[18px]"}`}>
        {row.open && (
          <span className="mr-2 -ml-4">
            <Chevron path={CHEVRON_DOWN} />
          </span>
        )}
        {row.icon && <span className="mr-[3px]">{row.icon}</span>}
        {row.name}
      </span>
    </th>
    <td
      className={`border-b border-[#c3d7f5] pl-1 whitespace-nowrap text-black ${row.bold ? "font-bold" : ""}`}
    >
      {row.value}
    </td>
  </tr>
);

const PropertiesPanel = () => (
  <aside className="mt-[5px] ml-[2px] flex w-[295px] shrink-0 flex-col rounded-t-[2px] border border-[#8495b3] pr-[2px] pl-px">
    <div className="flex h-[22px] shrink-0 items-center justify-between pr-[5px] pl-1 text-[#6f7fa3]">
      Заголовок
      <button className="block" aria-label="Закріпити">
        <Icon size={9} box={9}>
          <path d="M2.5 5V.5H6.5V5M5.5 .5V5M0 5.5H9M4.5 5.5V9" stroke="#3f4f7d" />
        </Icon>
      </button>
    </div>
    <div className="flex min-h-0 flex-1 overflow-hidden">
      <div className="flex-1 bg-white">
        <table className="w-full table-fixed border-collapse leading-[13px]">
          <colgroup>
            <col className="w-[145px]" />
            <col />
          </colgroup>
          <tbody>
            <PropCategory title="Основні параметри" />
            {MAIN_PROPS.map((row) => (
              <PropRow key={row.name} row={row} />
            ))}
            <PropCategory title="Додаткові відомості" />
            {EXTRA_PROPS.map((row) => (
              <PropRow key={row.name} row={row} />
            ))}
          </tbody>
        </table>
      </div>
      <div className="flex w-[16px] flex-col bg-[#dfe8f3] px-px">
        <button className="flex h-[17px] items-center justify-center" aria-label="Вгору">
          <Icon size={9} box={9}>
            <path d="M0 7 4.5 2 9 7Z" fill="#4f5f86" />
          </Icon>
        </button>
        <div className="flex h-[311px] items-center justify-center rounded-[2px] border border-[#8ba6cd] bg-gradient-to-r from-[#e3edf9] to-[#cbdbee]">
          <Icon size={8} box={8}>
            <path d="M0 .5H8M0 2.5H8M0 4.5H8M0 6.5H8" stroke="#8398bd" />
          </Icon>
        </div>
      </div>
    </div>
  </aside>
);

const GOODS = [
  ["4820003142936", "\u00a0Маргарин Олком Вершкова здоба 65% 200г", "2,000", "8,77", "17,54"],
  ["4820003145142", "Майонез Олком Kids style 67% 200г д/п", "3,000", "11,29", "33,88"],
  ["4820003145647", "Майонез Олком Провансаль 67% 360г д/п", "3,000", "16,28", "48,85"],
  ["4820003142745", "Маргарин Олком Вершковий Київський 72,5% 200г", "2,000", "7,50", "15,00"],
  ["4820003145111", "Олія Олком рафінована дезодорована 1л", "5,000", "34,64", "173,22"],
];

const SELECTED_ROW = 3;

const headCell = "border-r border-b border-[#7f98bb] px-1 font-normal";
const cell = "border-r border-b border-[#c3d7f0] pr-[3px] pb-px pl-1";

const GoodsColumns = () => (
  <colgroup>
    <col className="w-4" />
    <col className="w-[128px]" />
    <col className="w-[295px]" />
    <col className="w-[75px]" />
    <col className="w-[75px]" />
    <col className="w-[75px]" />
    <col className="w-[75px]" />
    <col />
  </colgroup>
);

const GoodsGrid = () => (
  <div className="mt-[5px] flex min-h-0 flex-1 flex-col border border-[#7f98bb] bg-white">
    <table className="w-full table-fixed border-separate border-spacing-0 leading-[13px] whitespace-nowrap">
      <GoodsColumns />
      <thead>
        <tr className="h-9 bg-gradient-to-b from-[#f0f6fe] to-[#dee9f7] text-left [&>th]:pb-[2px]">
          <th className={headCell} />
          <th className={headCell}>Штрихкод / Артикул</th>
          <th className={headCell}>
            <span className="flex items-center justify-between">
              Найменування товару
              <Icon size={7} box={7}>
                <path d="M0 5.5 3.5 2 7 5.5Z" fill="#222" />
              </Icon>
            </span>
          </th>
          <th className={headCell}>
            Одиниця
            <br />
            виміру
          </th>
          <th className={headCell}>Кількість</th>
          <th className={headCell}>
            Закупівельн
            <br />а ціна
          </th>
          <th className={headCell}>
            Сума в<br />
            закупівель...
          </th>
          <th className={headCell} />
        </tr>
      </thead>
      <tbody className="text-black">
        {GOODS.map(([code, name, qty, price, sum], i) => (
          <tr
            key={code}
            className={`h-[21px] ${i === SELECTED_ROW ? "bg-[#d5e6fb]" : i % 2 ? "bg-[#f2f6fb]" : "bg-white"}`}
          >
            <td className="border-r border-b border-[#7f98bb] bg-[#e9f1fb]">
              {i === SELECTED_ROW && (
                <Icon size={14} box={14}>
                  <path d="M6 3.5 10 7 6 10.5Z" fill="#000" />
                </Icon>
              )}
            </td>
            <td className={cell}>
              <span className="flex items-center">
                <button className="mr-[7px] -ml-[2px]" aria-label="Розгорнути рядок">
                  <Icon size={9} box={9}>
                    <rect x=".5" y=".5" width="8" height="8" fill="#fff" stroke="#4a4a4a" />
                    <path d="M2 4.5H7M4.5 2V7" stroke="#222" />
                  </Icon>
                </button>
                {code}
              </span>
            </td>
            <td
              className={
                i === SELECTED_ROW ? "border border-dotted border-black bg-white pb-[2px] pl-[3px]" : cell
              }
            >
              {name}
            </td>
            <td className={cell}>шт</td>
            <td className={`${cell} text-right`}>{qty}</td>
            <td className={`${cell} text-right`}>{price}</td>
            <td className={`${cell} text-right`}>{sum}</td>
            <td className={cell} />
          </tr>
        ))}
      </tbody>
    </table>
    <div className="mt-auto border-t border-[#7f98bb] bg-gradient-to-b from-[#eff5fd] to-[#cbdbee]">
      <table className="w-full table-fixed border-separate border-spacing-0 leading-[15px]">
        <GoodsColumns />
        <tbody>
          <tr className="h-[22px] text-right">
            <td colSpan={4} />
            <td className="pr-px">
              <span className="block border-r border-[#9fb3d0] pr-1">15,000</span>
            </td>
            <td />
            <td className="pr-px">
              <span className="block border-r border-[#9fb3d0] pr-1">288,49</span>
            </td>
            <td />
          </tr>
        </tbody>
      </table>
      <div className="flex h-[17px] items-center">
        <div className="flex items-center gap-[6px] pr-[3px] pl-[2px]">
          <NavButton name="first" />
          <NavButton name="fastBack" />
          <NavButton name="back" />
        </div>
        <span className="w-[78px] bg-white text-center leading-[17px] text-black">Record 4 of 5</span>
        <div className="flex items-center gap-[5px] px-[3px]">
          <NavButton name="forward" />
          <NavButton name="fastForward" />
          <NavButton name="last" />
          <EditButton name="Додати" d="M5 1V9M1 5H9" />
          <EditButton name="Вилучити" d="M1 5H9" />
          <EditButton name="Змінити" d="M3 6.5H8L5.5 4Z" />
          <EditButton name="Прийняти" d="M1 5 4 8 9 2" />
          <EditButton name="Скасувати" d="M1.5 1.5 8.5 8.5M8.5 1.5 1.5 8.5" />
        </div>
        <div className="flex h-[17px] flex-1 items-center bg-[#d9e5f3]">
          <span className="mr-1 ml-[2px]">
            <NavButton name="back" color="#2f3f68" />
          </span>
          <div className="flex h-[14px] flex-1 items-center rounded-l-[2px] border border-[#8ba6cd] bg-gradient-to-b from-[#e8f0fa] to-[#c6d7ec]">
            <span className="ml-[268px]">
              <Icon size={8} box={8}>
                <path d="M.5 1V7M2.5 1V7M4.5 1V7M6.5 1V7" stroke="#8398bd" />
              </Icon>
            </span>
          </div>
        </div>
      </div>
    </div>
  </div>
);

const Journal = () => (
  <div className="mt-[5px] flex h-[123px] shrink-0 flex-col rounded-t-[2px] border border-[#8495b3] px-px">
    <h3 className="h-[22px] pl-1 leading-[22px] text-[#6f7fa3]">Журнал</h3>
    <div className="flex-1 border border-[#7f98bb] bg-white">
      <table className="w-full table-fixed border-separate border-spacing-0">
        <thead>
          <tr className="h-5 bg-gradient-to-b from-[#f0f6fe] to-[#dee9f7] text-left">
            <th className={`${headCell} w-[60px]`}>Id</th>
            <th className={`${headCell} w-[143px]`}>Час операції</th>
            <th className={`${headCell} w-[402px]`}>Повідомлення</th>
            <th className={`${headCell} w-[124px]`}>Логін</th>
            <th className={headCell}>Комп'ютер</th>
          </tr>
        </thead>
      </table>
    </div>
  </div>
);

const InvoiceWindow = () => (
  <section className="absolute top-[365px] -right-16 -bottom-10 left-[293px] flex flex-col overflow-hidden rounded-tl-md border border-[#8091aa] bg-[#bfd1ea] px-[6px] pb-[7px] shadow-[0_2px_14px_rgba(0,0,0,0.6)]">
    <header className="flex h-[50px] shrink-0">
      <div className="flex w-[466px] shrink-0 flex-col pl-px">
        <div className="flex h-[29px] items-center">
          <QuickAccess icons={[<InvoiceIcon />, <SaveIcon gray />, <DocEditIcon lines />]} />
        </div>
        <TabBar active="Прибуткова накладна" tabs={["Створити", "Довідники", "Налаштування"]} />
      </div>
      <div className="flex w-[99px] shrink-0 flex-col items-center border-x border-t-4 border-x-[#d3e0f1] border-t-[#4480b4] bg-gradient-to-b from-[#8fb1d7] to-[#b9cee8] whitespace-nowrap">
        <span className="h-[25px] shrink-0 leading-[20px] font-bold text-white [text-shadow:1px_1px_1px_#4a6284]">
          Перелік товарів
        </span>
        <button className="h-[21px] shrink-0 self-start pt-[2px] pl-3 leading-[19px]">Інструменти</button>
      </div>
      <h2 className="pl-[14px] leading-[28px]">Прибуткова накладна № 6969</h2>
    </header>
    <div className="flex min-h-0 flex-1 flex-col border-x border-[#7f98bb] bg-[#cfdded]">
      <Ribbon>
        <Group width="w-[304px]" caption="Дії" launcher>
          <BigButton width="w-[72px]" icon={<SaveCloseIcon gray />} lines={["Зберегти", "й закрити"]} disabled />
          <BigButton width="w-[54px]" icon={<DeleteIcon gray />} lines={["Видалити"]} disabled />
          <div className="pt-1 pl-[10px]">
            <SmallButton icon={<SaveIcon gray plus />} label="Зберегти та створити" caret disabled />
            <SmallButton icon={<SaveIcon gray />} label="Зберегти" disabled />
          </div>
        </Group>
        <Group width="w-[291px] pl-[6px]" caption="Оперції" launcher>
          <BigButton width="w-[62px]" icon={<CheckIcon />} lines={["Провести"]} disabled />
          <BigButton width="mr-[3px] w-16" icon={<UndoIcon />} lines={["Відкотити"]} />
          <Divider />
          <BigButton width="w-[82px]" icon={<PrinterIcon />} lines={["Підготувати", "до друку"]} caret />
          <Divider />
          <BigButton width="w-[70px]" icon={<PayIcon />} lines={["Сплатити"]} />
        </Group>
        <Group width="w-[380px] pl-[6px]" caption="Редагування" launcher>
          <BigButton width="w-[100px]" icon={<ExcelIcon />} lines={["Майстер імпорту", "з MS Excel"]} disabled />
          <BigButton width="w-[94px]" icon={<BoxTableIcon />} lines={["Додати товари", "до документа"]} disabled />
          <BigButton width="mr-[6px] w-[98px]" icon={<RowsDeleteIcon />} lines={["Видалити", "позначені рядки"]} disabled />
          <Divider />
          <BigButton width="w-[72px]" icon={<CardUserIcon />} lines={["Знижкова", "картка"]} disabled />
        </Group>
      </Ribbon>
      <div className="flex min-h-0 flex-1">
        <PropertiesPanel />
        <div className="ml-1 flex min-w-0 flex-1 flex-col">
          <GoodsGrid />
          <Journal />
        </div>
      </div>
    </div>
  </section>
);

const App = () => {
  return (
    <main className="relative h-screen overflow-hidden bg-white font-['Noto_Sans',sans-serif] text-[11px] text-[#1e395b]">
      <MainWindow />
      <StockCardWindow />
      <GoodsWindow />
      <InvoiceWindow />
    </main>
  );
};

export default App;
